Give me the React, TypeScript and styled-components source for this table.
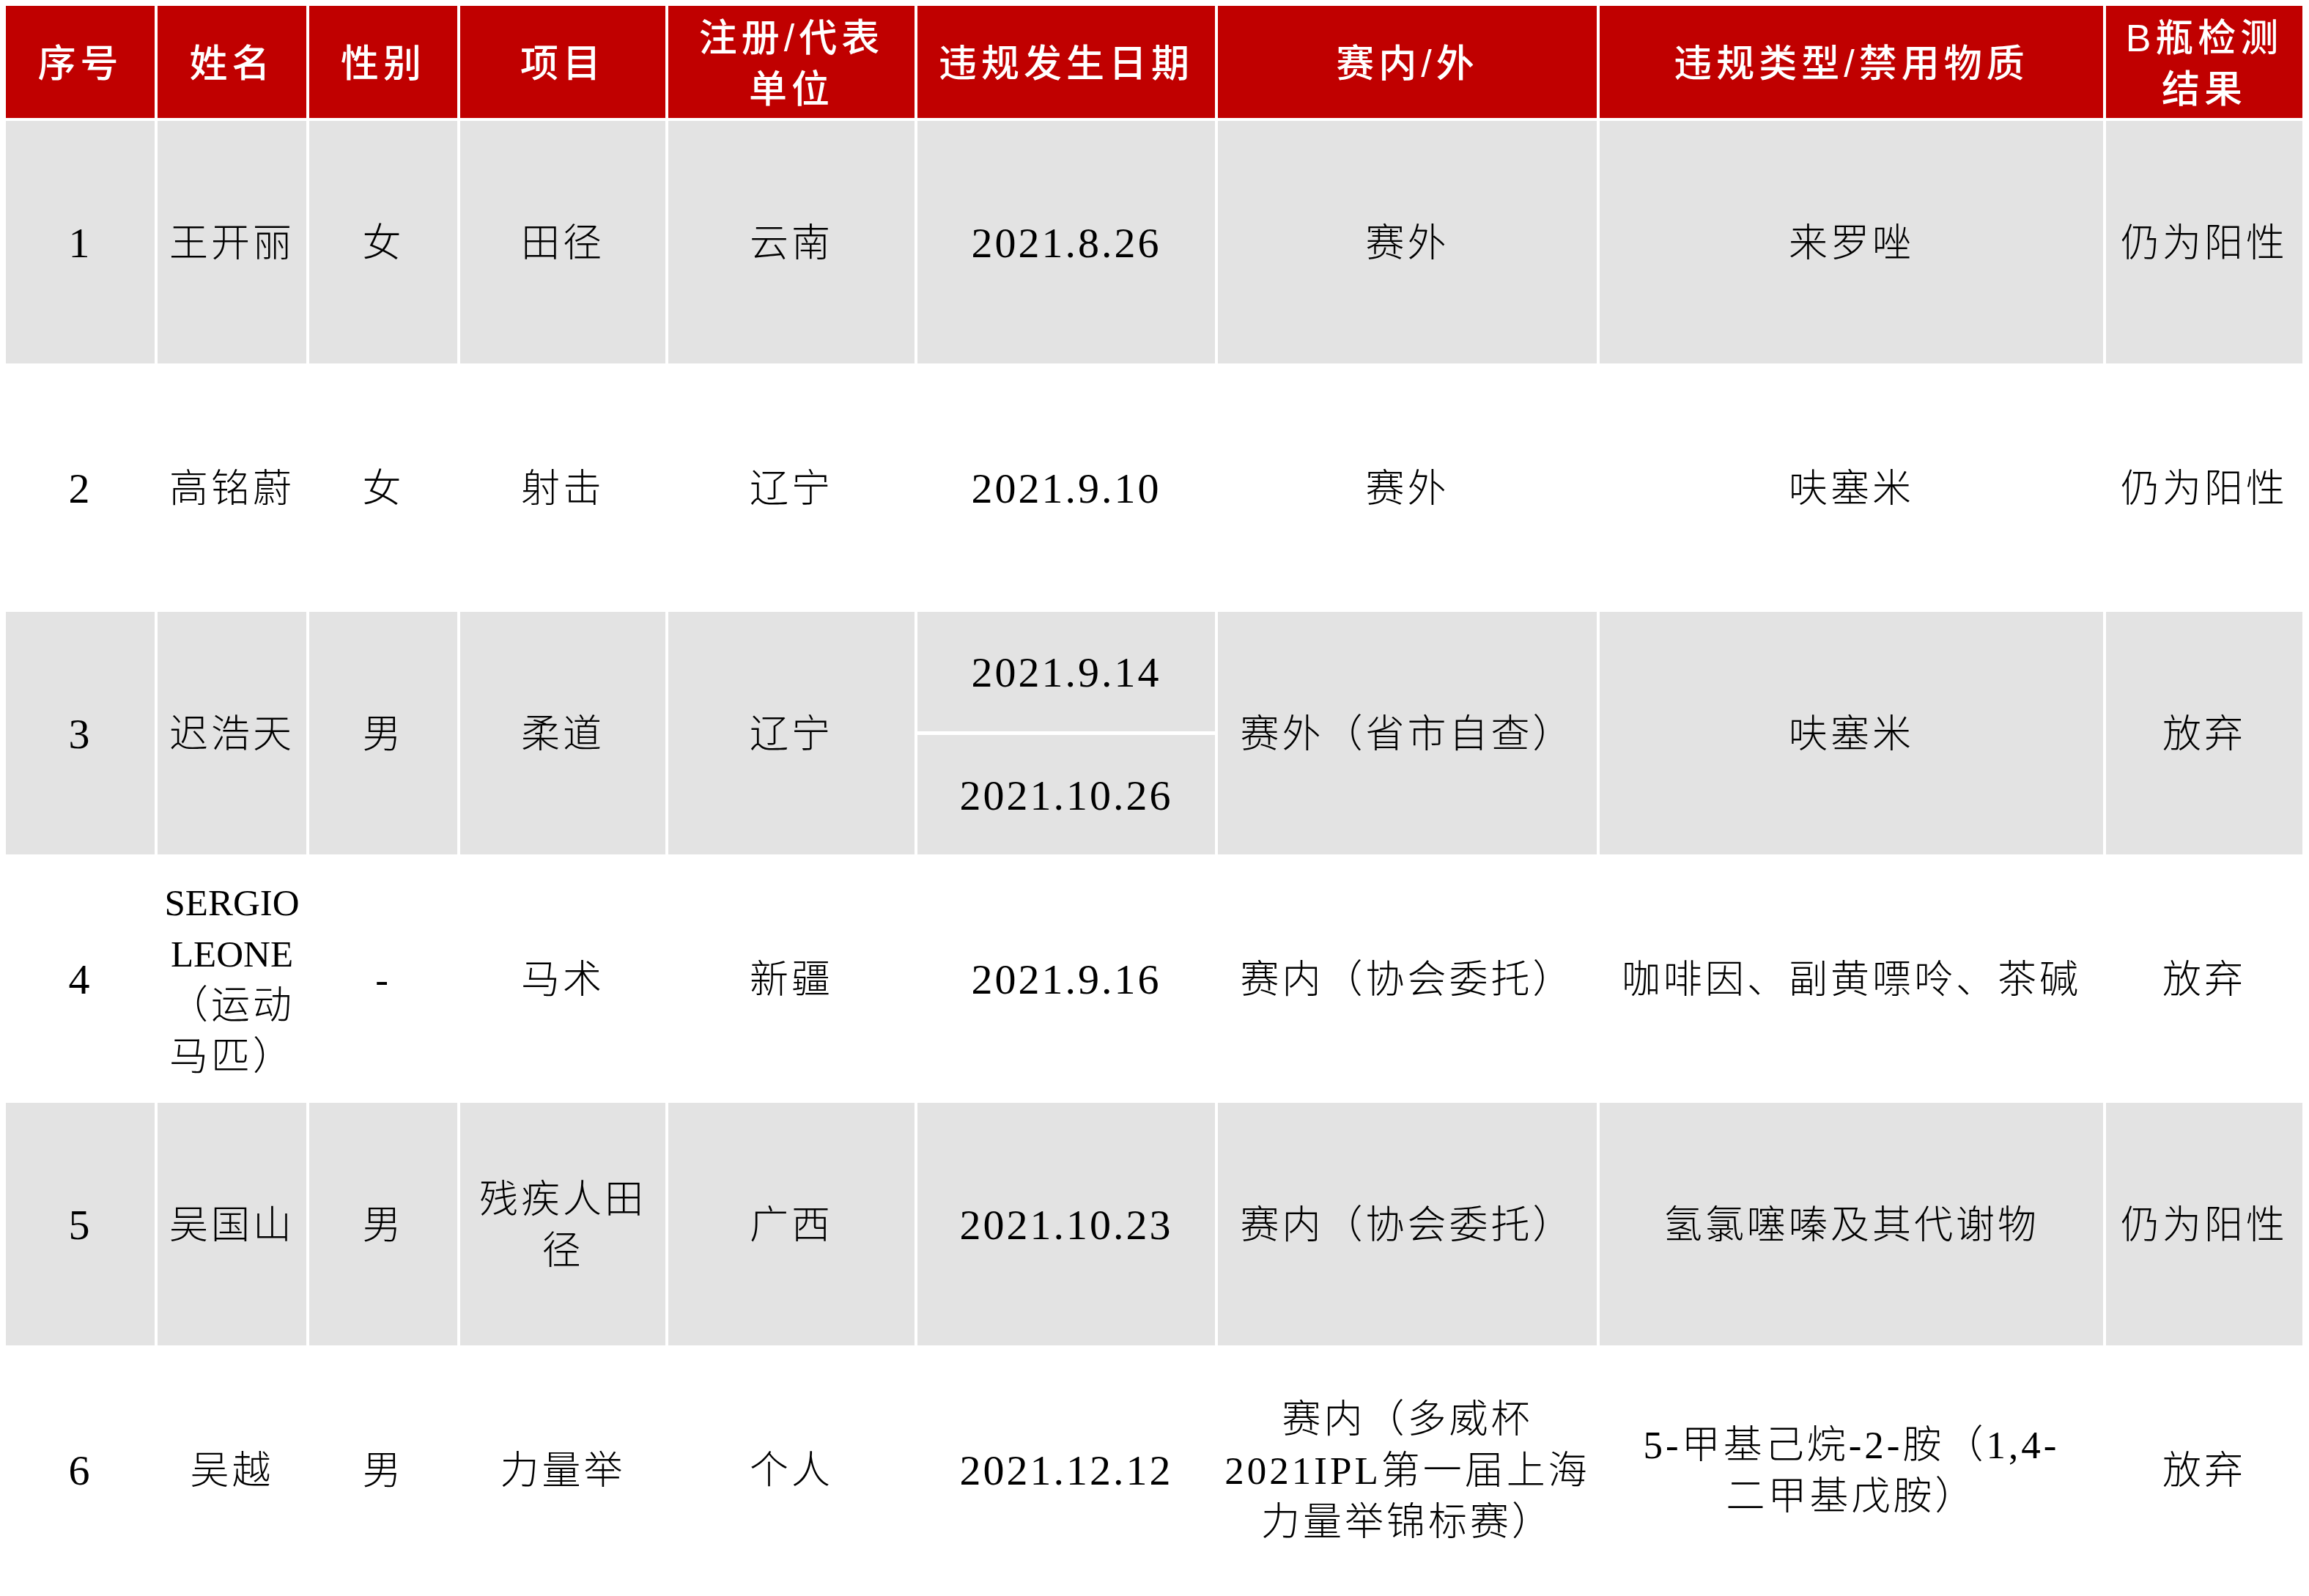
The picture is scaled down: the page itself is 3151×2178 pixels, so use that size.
import React from 'react';
import styled, { createGlobalStyle } from 'styled-components';

const GlobalStyle = createGlobalStyle`
  html, body {
    margin: 0;
    padding: 0;
    background: #ffffff;
  }
  body {
    font-family: "Liberation Serif", "Noto Sans CJK SC", serif;
  }
`;

const Page = styled.div`
  padding: 8px;
`;

const Table = styled.div`
  display: grid;
  grid-template-columns: 203px 203px 202px 280px 336px 406px 517px 687px 268px;
  grid-template-rows: 153px repeat(6, 331px);
  gap: 4px;
  width: 3134px;
`;

const HeadCell = styled.div`
  background: #c00000;
  color: #ffffff;
  display: flex;
  flex-direction: column;
  align-items: center;
  justify-content: center;
  text-align: center;
  padding-top: 4px;
  font-family: "Liberation Sans", "Noto Sans CJK SC", sans-serif;
  font-weight: 500;
  font-size: 52px;
  line-height: 70px;
  letter-spacing: 6px;
`;

const Cell = styled.div<{ $shade: boolean; $latin?: boolean }>`
  background: ${(p) => (p.$shade ? '#e3e3e3' : '#ffffff')};
  color: #000000;
  display: flex;
  flex-direction: column;
  align-items: center;
  justify-content: center;
  text-align: center;
  padding-top: 3px;
  font-family: "Liberation Serif", "Noto Sans CJK SC", serif;
  font-weight: 300;
  font-size: ${(p) => (p.$latin ? '58px' : '53px')};
  letter-spacing: ${(p) => (p.$latin ? '3px' : '4px')};
  line-height: 70px;
`;

const SplitCell = styled.div`
  display: grid;
  grid-template-rows: 1fr 1fr;
  gap: 5px;
  background: #ffffff;
`;

const Line = styled.span<{ $narrow?: boolean }>`
  display: block;
  white-space: nowrap;
  letter-spacing: ${(p) => (p.$narrow ? '0px' : 'inherit')};
  font-size: ${(p) => (p.$narrow ? '51px' : 'inherit')};
`;

type Text = string | string[];

interface Row {
  no: string;
  name: Text;
  sex: string;
  sport: Text;
  unit: string;
  dates: string[];
  inout: Text;
  type: Text;
  result: string;
}

const headers: Text[] = [
  '序号',
  '姓名',
  '性别',
  '项目',
  ['注册/代表', '单位'],
  '违规发生日期',
  '赛内/外',
  '违规类型/禁用物质',
  ['B瓶检测', '结果'],
];

const rows: Row[] = [
  {
    no: '1',
    name: '王开丽',
    sex: '女',
    sport: '田径',
    unit: '云南',
    dates: ['2021.8.26'],
    inout: '赛外',
    type: '来罗唑',
    result: '仍为阳性',
  },
  {
    no: '2',
    name: '高铭蔚',
    sex: '女',
    sport: '射击',
    unit: '辽宁',
    dates: ['2021.9.10'],
    inout: '赛外',
    type: '呋塞米',
    result: '仍为阳性',
  },
  {
    no: '3',
    name: '迟浩天',
    sex: '男',
    sport: '柔道',
    unit: '辽宁',
    dates: ['2021.9.14', '2021.10.26'],
    inout: '赛外（省市自查）',
    type: '呋塞米',
    result: '放弃',
  },
  {
    no: '4',
    name: ['SERGIO', 'LEONE', '（运动', '马匹）'],
    sex: '-',
    sport: '马术',
    unit: '新疆',
    dates: ['2021.9.16'],
    inout: '赛内（协会委托）',
    type: '咖啡因、副黄嘌呤、茶碱',
    result: '放弃',
  },
  {
    no: '5',
    name: '吴国山',
    sex: '男',
    sport: ['残疾人田', '径'],
    unit: '广西',
    dates: ['2021.10.23'],
    inout: '赛内（协会委托）',
    type: '氢氯噻嗪及其代谢物',
    result: '仍为阳性',
  },
  {
    no: '6',
    name: '吴越',
    sex: '男',
    sport: '力量举',
    unit: '个人',
    dates: ['2021.12.12'],
    inout: ['赛内（多威杯', '2021IPL第一届上海', '力量举锦标赛）'],
    type: ['5-甲基己烷-2-胺（1,4-', '二甲基戊胺）'],
    result: '放弃',
  },
];

const isWord = (s: string) => /^[A-Z]+$/.test(s);

const renderText = (t: Text) =>
  (Array.isArray(t) ? t : [t]).map((s, i) => (
    <Line key={i} $narrow={isWord(s)}>
      {s}
    </Line>
  ));

export default function App() {
  return (
    <>
      <GlobalStyle />
      <Page>
        <Table>
          {headers.map((h, i) => (
            <HeadCell key={`h${i}`}>{renderText(h)}</HeadCell>
          ))}
          {rows.map((r, i) => {
            const shade = i % 2 === 0;
            return (
              <React.Fragment key={r.no}>
                <Cell $shade={shade} $latin>
                  {renderText(r.no)}
                </Cell>
                <Cell $shade={shade}>{renderText(r.name)}</Cell>
                <Cell $shade={shade}>{renderText(r.sex)}</Cell>
                <Cell $shade={shade}>{renderText(r.sport)}</Cell>
                <Cell $shade={shade}>{renderText(r.unit)}</Cell>
                {r.dates.length > 1 ? (
                  <SplitCell>
                    {r.dates.map((d) => (
                      <Cell key={d} $shade={shade} $latin>
                        {renderText(d)}
                      </Cell>
                    ))}
                  </SplitCell>
                ) : (
                  <Cell $shade={shade} $latin>
                    {renderText(r.dates[0])}
                  </Cell>
                )}
                <Cell $shade={shade}>{renderText(r.inout)}</Cell>
                <Cell $shade={shade}>{renderText(r.type)}</Cell>
                <Cell $shade={shade}>{renderText(r.result)}</Cell>
              </React.Fragment>
            );
          })}
        </Table>
      </Page>
    </>
  );
}
